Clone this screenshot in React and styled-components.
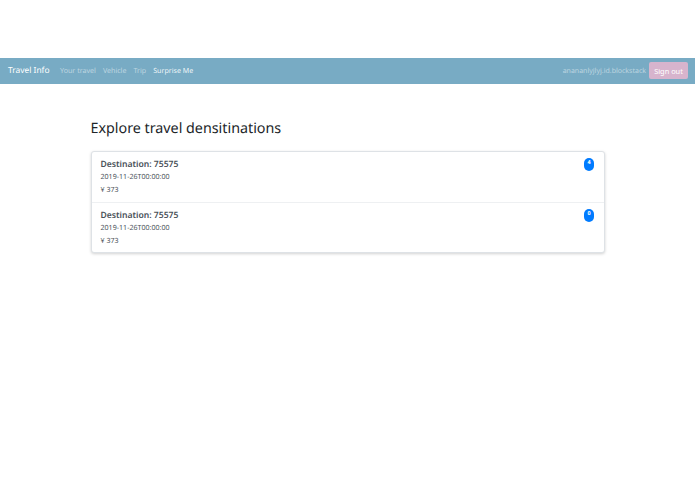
import React from "react";
import styled, { createGlobalStyle } from "styled-components";

const Global = createGlobalStyle`
  html, body { margin: 0; padding: 0; background: #fff; }
  body {
    font-family: "Noto Sans", "Open Sans", "Liberation Sans", sans-serif;
    color: #212529;
    text-rendering: geometricPrecision;
  }
  * { box-sizing: border-box; }
`;

const Page = styled.div`
  padding-top: 58px;
  min-height: 494px;
`;

const Navbar = styled.nav`
  height: 25.5px;
  background: #78abc4;
  display: flex;
  align-items: center;
  padding: 0 7px 0 8px;
`;

const Brand = styled.a`
  font-size: 8.4px;
  color: #fff;
  margin-right: 10.5px;
  line-height: 1;
`;

const NavLinks = styled.div`
  display: flex;
  align-items: center;
  gap: 7px;
  flex: 1;
  padding-top: 1px;
`;

const NavLink = styled.a`
  font-size: 7.1px;
  line-height: 1;
  color: ${(p) => (p.$active ? "rgba(255,255,255,.9)" : "rgba(255,255,255,.5)")};
`;

const User = styled.span`
  font-size: 7px;
  line-height: 1;
  padding-top: 1px;
  color: rgba(255,255,255,.5);
  margin-right: 3px;
`;

const SignOut = styled.button`
  width: 39px;
  height: 17px;
  border: 0;
  padding: 0;
  border-radius: 2px;
  background: #d7b4cd;
  color: #fff;
  font: inherit;
  font-size: 7.4px;
`;

const Main = styled.main`
  width: 514px;
  margin: 0 0 0 90.5px;
  padding-top: 35.5px;
`;

const Heading = styled.h1`
  margin: 0 0 13px;
  font-size: 14.3px;
  font-weight: 400;
  line-height: 19px;
  color: #212529;
`;

const List = styled.div`
  border: 1px solid #dee2e6;
  border-radius: 3px;
  box-shadow: 0 1px 3px rgba(0,0,0,.18);
  background: #fff;
`;

const Item = styled.div`
  height: 50px;
  padding: 5px 9.5px 0 9px;
  display: flex;
  justify-content: space-between;
  align-items: flex-start;
  & + & { border-top: 1px solid #eef0f2; }
`;

const Details = styled.div`
  display: flex;
  flex-direction: column;
  padding-top: 0.5px;
`;

const Title = styled.div`
  font-size: 8.6px;
  font-weight: 600;
  line-height: 12px;
  color: #495057;
`;

const Meta = styled.div`
  font-size: 7.1px;
  line-height: 13px;
  color: #495057;
  margin-top: ${(p) => p.$gap || 0}px;
`;

const Badge = styled.span`
  width: 10px;
  height: 13px;
  margin-top: 0.5px;
  border-radius: 5px;
  background: #007bff;
  color: #fff;
  font-size: 5.5px;
  font-weight: 700;
  line-height: 9px;
  text-align: center;
`;

const items = [
  { id: 1, badge: 4 },
  { id: 2, badge: 0 },
];

export default function App() {
  return (
    <Page>
      <Global />
      <Navbar>
        <Brand>Travel Info</Brand>
        <NavLinks>
          <NavLink>Your travel</NavLink>
          <NavLink>Vehicle</NavLink>
          <NavLink>Trip</NavLink>
          <NavLink $active>Surprise Me</NavLink>
        </NavLinks>
        <User>anananlyjlyj.id.blockstack</User>
        <SignOut>Sign out</SignOut>
      </Navbar>
      <Main>
        <Heading>Explore travel densitinations</Heading>
        <List>
          {items.map((it) => (
            <Item key={it.id}>
              <Details>
                <Title>Destination: 75575</Title>
                <Meta $gap={1}>2019-11-26T00:00:00</Meta>
                <Meta>¥ 373</Meta>
              </Details>
              <Badge>{it.badge}</Badge>
            </Item>
          ))}
        </List>
      </Main>
    </Page>
  );
}
